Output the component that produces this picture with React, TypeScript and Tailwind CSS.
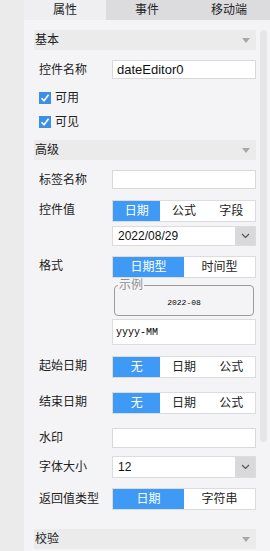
import React from "react";

const font = { fontFamily: '"Liberation Sans", "Noto Sans CJK SC", sans-serif' };

function Header({ title }: { title: string }) {
  return (
    <div className="flex h-[20px] items-center justify-between bg-[#ebebeb] pl-[1px] pr-[6px] text-[12px] text-[#222]">
      <span>{title}</span>
      <svg width="8" height="5" viewBox="0 0 8 5">
        <path d="M0 0 H8 L4 5 Z" fill="#a8a8a8" />
      </svg>
    </div>
  );
}

function Check({ label }: { label: string }) {
  return (
    <div className="flex h-[12px] items-center pl-[5px] text-[12px] text-[#222]">
      <span className="mr-[4px] flex h-[12px] w-[12px] items-center justify-center bg-[#3d8fe6]">
        <svg width="10" height="10" viewBox="0 0 10 10">
          <path d="M1.5 5.2 L4 7.8 L8.6 1.8" stroke="white" strokeWidth="1.6" fill="none" />
        </svg>
      </span>
      <span>{label}</span>
    </div>
  );
}

function Seg({ items, className = "" }: { items: string[]; className?: string }) {
  return (
    <div className={"flex h-[22px] w-[144px] border border-[#dcdcde] bg-white text-[12px] " + className}>
      {items.map((it, i) => (
        <div
          key={it}
          className={
            "flex flex-1 items-center justify-center " +
            (i === 0 ? "bg-[#3f9af5] text-white" : "text-[#222]")
          }
        >
          {it}
        </div>
      ))}
    </div>
  );
}

function Chevron() {
  return (
    <div className="flex w-[20px] items-center justify-center bg-[#d9d9dc]">
      <svg width="9" height="6" viewBox="0 0 9 6">
        <path d="M1 1 L4.5 4.5 L8 1" stroke="#555" strokeWidth="1.2" fill="none" />
      </svg>
    </div>
  );
}

function Select({ value }: { value: string }) {
  return (
    <div className="flex h-[20px] w-[144px] border border-[#dcdcde] bg-white">
      <div className="flex flex-1 items-center pl-[5px] text-[12px] text-[#111]">{value}</div>
      <Chevron />
    </div>
  );
}

function Label({ text, top = false }: { text: string; top?: boolean }) {
  return (
    <div className={"w-[78px] pl-[5px] text-[12px] text-[#222] " + (top ? "pt-[1px]" : "")}>{text}</div>
  );
}

export default function App() {
  return (
    <div className="flex h-[551px] w-[270px] overflow-hidden" style={font}>
      <div className="w-[24px] bg-[#ebebeb]" />
      <div className="flex flex-1 flex-col bg-[#f4f4f6]">
        <div className="grid h-[20px] grid-cols-3 text-[12px] text-[#222]">
          <div className="flex items-center justify-center bg-[#efeff1]">属性</div>
          <div className="flex items-center justify-center bg-[#dcdcdf]">事件</div>
          <div className="flex items-center justify-center bg-[#dcdcdf]">移动端</div>
        </div>
        <div className="flex flex-1">
          <div className="ml-[10px] flex w-[222px] flex-col">
            <div className="mt-[10px]">
              <Header title="基本" />
            </div>
            <div className="mt-[10px] flex items-center">
              <Label text="控件名称" />
              <div className="flex h-[19px] w-[144px] items-center border border-[#d9d9d9] bg-white pl-[4px] text-[13px] text-[#111]">
                dateEditor0
              </div>
            </div>
            <div className="mt-[13px]">
              <Check label="可用" />
            </div>
            <div className="mt-[12px]">
              <Check label="可见" />
            </div>
            <div className="mt-[12px]">
              <Header title="高级" />
            </div>
            <div className="mt-[10px] flex items-center">
              <Label text="标签名称" />
              <div className="h-[19px] w-[144px] border border-[#d9d9d9] bg-white" />
            </div>
            <div className="mt-[11px] flex items-start">
              <Label text="控件值" top />
              <div className="flex flex-col">
                <Seg items={["日期", "公式", "字段"]} />
                <div className="mt-[4px]">
                  <Select value="2022/08/29" />
                </div>
              </div>
            </div>
            <div className="mt-[10px] flex items-start">
              <Label text="格式" top />
              <div className="flex flex-col">
                <Seg items={["日期型", "时间型"]} className="h-[21px]" />
                <fieldset className="mx-[2px] mt-[1px] h-[37px] rounded-[4px] border border-[#9c9c9c] px-[3px] pb-0 pt-0">
                  <legend className="ml-[0px] px-[1px] text-[12px] leading-[12px] text-[#8f8f8f]">示例</legend>
                  <div
                    className="mt-[6px] text-center text-[8px] leading-[12px] text-black"
                    style={{ fontFamily: '"Liberation Mono", monospace' }}
                  >
                    2022-08
                  </div>
                </fieldset>
                <div
                  className="mt-[3px] flex h-[26px] w-[144px] items-center border border-[#dcdcdc] bg-white pl-[3px] text-[10px] text-black"
                  style={{ fontFamily: '"Liberation Mono", monospace' }}
                >
                  yyyy-MM
                </div>
              </div>
            </div>
            <div className="mt-[11px] flex items-start">
              <Label text="起始日期" top />
              <Seg items={["无", "日期", "公式"]} />
            </div>
            <div className="mt-[14px] flex items-start">
              <Label text="结束日期" top />
              <Seg items={["无", "日期", "公式"]} />
            </div>
            <div className="mt-[14px] flex items-center">
              <Label text="水印" />
              <div className="h-[20px] w-[144px] border border-[#d9d9d9] bg-white" />
            </div>
            <div className="mt-[8px] flex items-center">
              <Label text="字体大小" />
              <div className="flex h-[22px] w-[144px] border border-[#dcdcde] bg-white">
                <div className="flex flex-1 items-center pl-[5px] text-[12px] text-[#111]">12</div>
                <Chevron />
              </div>
            </div>
            <div className="mt-[10px] flex items-center">
              <Label text="返回值类型" />
              <Seg items={["日期", "字符串"]} />
            </div>
            <div className="mt-[19px]">
              <Header title="校验" />
            </div>
          </div>
          <div className="ml-[4px] mt-[10px] h-[412px] w-[7px] rounded-[4px] bg-[#e6e6e8]" />
        </div>
      </div>
    </div>
  );
}
